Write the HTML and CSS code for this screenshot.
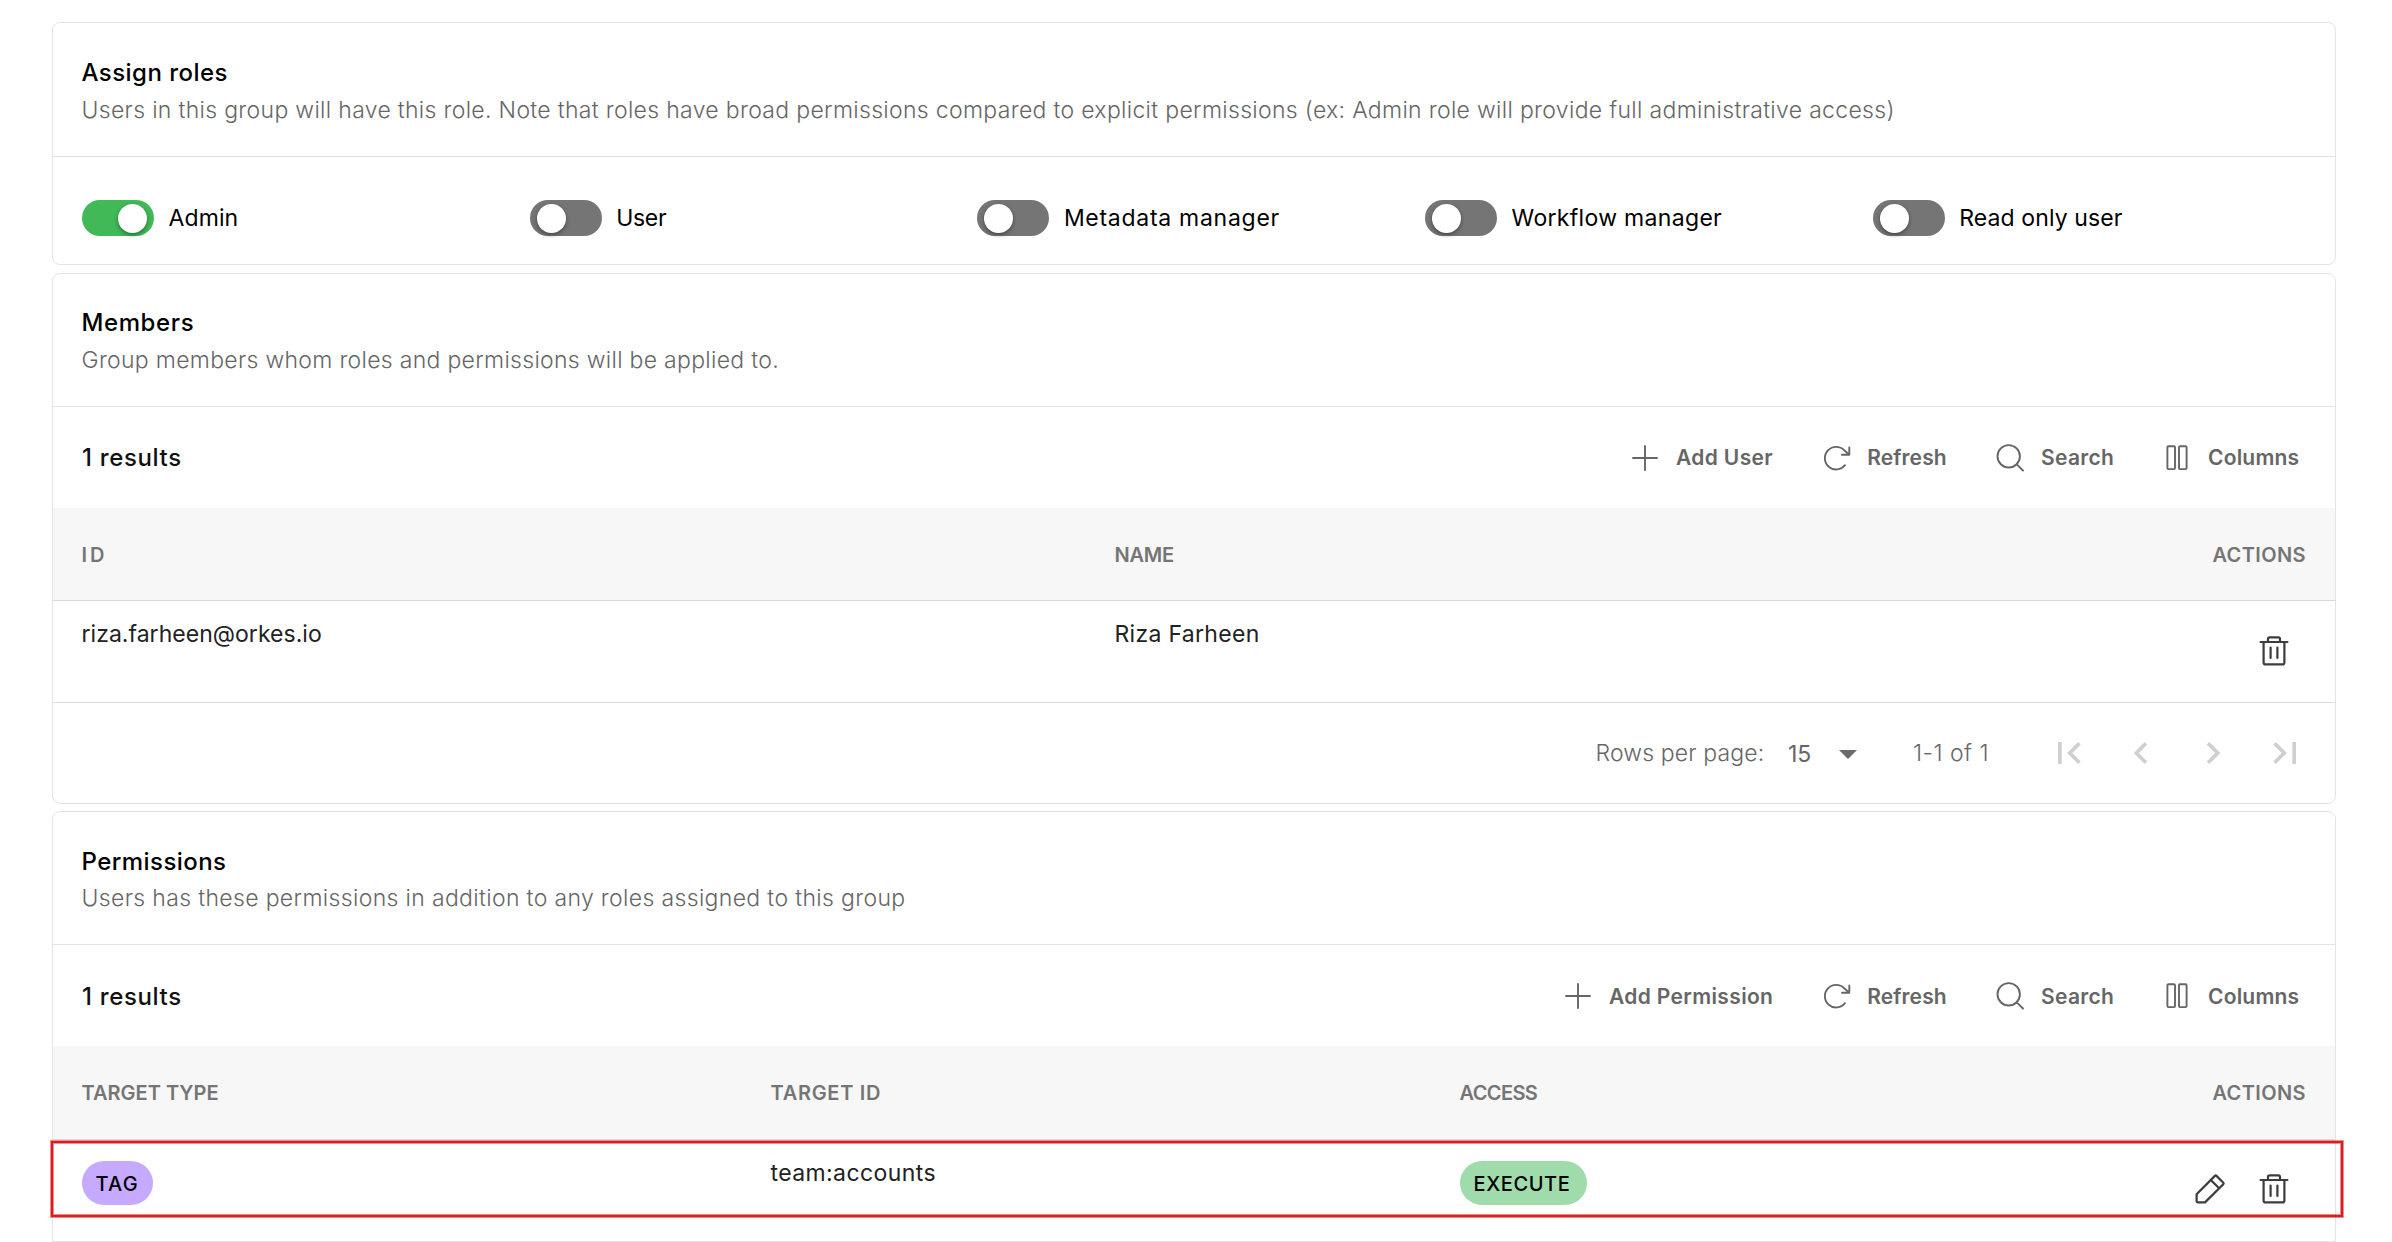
FILE: index.html
```html
<!DOCTYPE html>
<html lang="en">
<head>
<meta charset="utf-8">
<title>Group settings</title>
<link rel="stylesheet" href="styles.css">
</head>
<body>
<svg class="sprite" aria-hidden="true">
  <symbol id="plus" viewBox="0 0 32 32"><path d="M16 4v24M4 16h24"/></symbol>
  <symbol id="refresh" viewBox="0 0 32 32"><path d="M25 23.2A11.3 11.3 0 1 1 24.3 8.3L29 12.6M29.3 5.500v7.300h-7.300"/></symbol>
  <symbol id="search" viewBox="0 0 32 32"><circle cx="14.7" cy="14.3" r="11.2"/><path d="M22.7 22.4l6.3 6.1"/></symbol>
  <symbol id="columns" viewBox="0 0 32 32"><rect x="6.4" y="4.3" width="7.6" height="22.8" rx="1"/><rect x="18" y="4.3" width="7.6" height="22.8" rx="1"/></symbol>
  <symbol id="trash" viewBox="0 0 32 32"><path d="M2.6 7h26.8M5.6 7v20.4q0 2 2 2h16.8q2 0 2-2V7M10 7V4q0-1.600 1.600-1.600h8.800q1.600 0 1.600 1.600v3M12.600 12.500v10.500M19.400 12.500v10.500"/></symbol>
  <symbol id="pencil" viewBox="0 0 32 32"><path d="M2.600 21.200L20.900 2.900q.8-.8 1.600 0l6.800 6.800q.8.800 0 1.600L11 29.400H4.200q-1.600 0-1.600-1.600zM16.800 7l8.300 8.300"/></symbol>
</svg>
<main class="page">
  <section class="card">
    <header class="card-head first">
      <h2>Assign roles</h2>
      <p>Users in this group will have this role. Note that roles have broad permissions compared to explicit permissions (ex: Admin role will provide full administrative access)</p>
    </header>
    <div class="roles">
      <label class="role"><span class="switch on"></span><span>Admin</span></label>
      <label class="role"><span class="switch"></span><span class="tight">User</span></label>
      <label class="role"><span class="switch"></span><span class="wide">Metadata manager</span></label>
      <label class="role"><span class="switch"></span><span class="mid">Workflow manager</span></label>
      <label class="role"><span class="switch"></span><span>Read only user</span></label>
    </div>
  </section>

  <section class="card members">
    <header class="card-head">
      <h2>Members</h2>
      <p class="desc-narrow">Group members whom roles and permissions will be applied to.</p>
    </header>
    <div class="toolbar">
      <h3>1 results</h3>
      <button><svg><use href="#plus"/></svg><span class="add-user">Add User</span></button>
      <button><svg><use href="#refresh"/></svg><span class="b-refresh">Refresh</span></button>
      <button><svg><use href="#search"/></svg><span class="b-search">Search</span></button>
      <button><svg><use href="#columns"/></svg><span class="b-columns">Columns</span></button>
    </div>
    <div class="grid two thead">
      <span class="id">ID</span><span class="name">NAME</span><span class="end">ACTIONS</span>
    </div>
    <div class="grid two row">
      <span class="email">riza.farheen@orkes.io</span><span class="person">Riza Farheen</span>
      <span class="actions"><svg><use href="#trash"/></svg></span>
    </div>
    <footer class="pager">
      <span class="rpp">Rows per page:</span>
      <span class="size">15</span>
      <span class="caret"></span>
      <span class="range">1-1 of 1</span>
      <span class="nav">
        <svg viewBox="0 0 24 24"><path d="M18.410 16.590L13.820 12l4.590-4.590L17 6l-6 6 6 6zM6 6h2v12H6z"/></svg>
        <svg viewBox="0 0 24 24"><path d="M15.410 7.410L14 6l-6 6 6 6 1.410-1.410L10.830 12z"/></svg>
        <svg viewBox="0 0 24 24"><path d="M10 6L8.590 7.410 13.170 12l-4.580 4.590L10 18l6-6z"/></svg>
        <svg viewBox="0 0 24 24"><path d="M5.590 7.410L10.180 12l-4.590 4.590L7 18l6-6-6-6zM16 6h2v12h-2z"/></svg>
      </span>
    </footer>
  </section>

  <section class="card permissions">
    <header class="card-head">
      <h2>Permissions</h2>
      <p class="desc-wide">Users has these permissions in addition to any roles assigned to this group</p>
    </header>
    <div class="toolbar">
      <h3>1 results</h3>
      <button><svg><use href="#plus"/></svg><span class="add-perm">Add Permission</span></button>
      <button><svg><use href="#refresh"/></svg><span class="b-refresh">Refresh</span></button>
      <button><svg><use href="#search"/></svg><span class="b-search">Search</span></button>
      <button><svg><use href="#columns"/></svg><span class="b-columns">Columns</span></button>
    </div>
    <div class="grid three thead">
      <span class="type">TARGET TYPE</span><span class="tid">TARGET ID</span><span class="access">ACCESS</span><span class="end">ACTIONS</span>
    </div>
    <div class="grid three row">
      <span><b class="chip tag">TAG</b></span><span class="target">team:accounts</span><span><b class="chip exec">EXECUTE</b></span>
      <span class="actions"><svg><use href="#pencil"/></svg><svg><use href="#trash"/></svg></span>
      <span class="highlight"></span>
    </div>
  </section>
</main>
</body>
</html>
```
FILE: styles.css
```css
* { box-sizing: border-box; }
body {
  margin: 0;
  background: #fff;
  color: #000;
  font-family: Inter, "Open Sans", sans-serif;
  font-size: 23px;
  overflow: hidden;
}
.sprite { display: none; }
svg {
  display: block;
  flex: none;
  fill: none;
  stroke: currentColor;
  stroke-width: 1.9;
  stroke-linecap: round;
  stroke-linejoin: round;
}
.page { padding: 22px 56px 0 52px; }
.card {
  border: 1px solid #e4e4e4;
  border-radius: 8px;
  margin-bottom: 8px;
}
.members { margin-bottom: 7px; }
.permissions { margin-bottom: 0; border-radius: 8px 8px 0 0; }

.card-head {
  height: 133px;
  padding: 31px 28.5px 0;
  border-bottom: 1px solid #e4e4e4;
}
.card-head.first { height: 134px; }
.first h2 { line-height: 38px; }
h2, p, h3 { margin: 0; }
h2 { font-size: 24px; font-weight: 500; line-height: 37px; letter-spacing: .45px; }
p { font-weight: 300; line-height: 37px; letter-spacing: .32px; color: #666; white-space: nowrap; }
.members h2 { line-height: 35px; padding-bottom: 2px; letter-spacing: .6px; }
.desc-narrow { letter-spacing: .3px; }
.desc-wide { letter-spacing: .345px; }

.roles {
  display: grid;
  grid-template-columns: repeat(5, 447.7px);
  height: 107px;
  padding: 43px 0 0 29px;
}
.role { display: flex; gap: 14.5px; height: 36px; line-height: 37px; font-weight: 375; letter-spacing: .1px; }
.tight { letter-spacing: -.3px; }
.wide { letter-spacing: .72px; }
.mid { letter-spacing: .32px; }
.switch {
  display: flex;
  align-items: center;
  width: 72px;
  height: 36px;
  padding: 0 7px;
  border-radius: 18px;
  background: #757575;
}
.switch::before {
  content: "";
  width: 29px;
  height: 29px;
  border-radius: 50%;
  background: #fff;
  box-shadow: 0 2px 4px rgba(0, 0, 0, .4);
}
.switch.on { justify-content: flex-end; background: #41b957; }

.toolbar {
  display: flex;
  align-items: center;
  gap: 47px;
  height: 101px;
  padding: 0 36px 0 29px;
}
.permissions .toolbar { padding-top: 1px; }
h3 { margin-right: auto; font-size: 24px; font-weight: 500; letter-spacing: .65px; color: #111; }
button {
  display: flex;
  align-items: center;
  gap: 15px;
  padding: 0;
  border: 0;
  background: none;
  color: #666;
  font: 600 21px/32px Inter, "Open Sans", sans-serif;
}
button svg { width: 32px; height: 32px; }
button span { white-space: nowrap; }
.permissions button { line-height: 33px; }
.add-user { width: 97px; letter-spacing: .35px; }
.add-perm { width: 164px; letter-spacing: .35px; }
.b-refresh { width: 80px; letter-spacing: .15px; }
.b-search { width: 73px; letter-spacing: .3px; }
.b-columns { width: 91px; letter-spacing: .2px; }

.grid { display: grid; padding: 0 29px 0 28.5px; }
.two { grid-template-columns: 1033px 1fr 110px; }
.three { grid-template-columns: 689px 689px 1fr 140px; }
.thead {
  align-items: center;
  height: 93px;
  padding-top: 1px;
  background: #f7f7f7;
  border-bottom: 1px solid #d8d8d8;
  color: #757575;
  font-size: 20px;
  font-weight: 600;
}
.three.thead { height: 94px; }
.id { letter-spacing: 3px; }
.name { letter-spacing: -.2px; }
.type { letter-spacing: 0; }
.tid { letter-spacing: .7px; }
.access { letter-spacing: -.6px; }
.end { text-align: right; letter-spacing: .4px; }
.row {
  position: relative;
  height: 102px;
  padding-top: 15px;
  border-bottom: 1px solid #dedede;
  line-height: 36px;
  font-weight: 375;
  color: #222;
}
.three.row { height: 101px; border: 0; }
.email { letter-spacing: .03px; }
.person { letter-spacing: .3px; }
.target { letter-spacing: .4px; }
.actions {
  display: flex;
  justify-content: flex-end;
  gap: 32px;
  padding: 19px 16px 0 0;
  color: #3c3c3c;
}
.actions svg { width: 32px; height: 32px; stroke-width: 2.2; }
.three .actions { padding-top: 18px; }
.chip {
  display: flex;
  align-items: center;
  height: 44px;
  margin-top: 6px;
  padding: 1px 0 0 14px;
  border-radius: 22px;
  color: #000;
  font-size: 20px;
  font-weight: 500;
}
.tag { width: 71px; letter-spacing: 1.2px; background: #c6aaff; }
.exec { width: 127px; letter-spacing: .6px; background: #a0dbac; }
.highlight {
  position: absolute;
  left: -2px;
  top: 1px;
  width: 2292px;
  height: 76px;
  border: 2px solid #dd1b1b;
  box-shadow: 0 0 0 1px rgba(221, 27, 27, .5), inset 0 0 0 1px rgba(221, 27, 27, .5);
}

.pager {
  display: flex;
  align-items: center;
  justify-content: flex-end;
  height: 100px;
  padding-right: 28px;
  color: #666;
  font-weight: 300;
}
.rpp { width: 192.5px; letter-spacing: .15px; }
.size { width: 51px; padding-top: 1px; font-weight: 400; }
.caret {
  width: 18px;
  margin-right: 56px;
  border: 9px solid transparent;
  border-top-color: #6b6b6b;
  border-bottom: 0;
  margin-top: 3px;
}
.range { width: 134px; letter-spacing: .5px; }
.nav { display: flex; gap: 28px; }
.nav svg { width: 44px; height: 44px; fill: #cfcfcf; stroke: none; }
```
